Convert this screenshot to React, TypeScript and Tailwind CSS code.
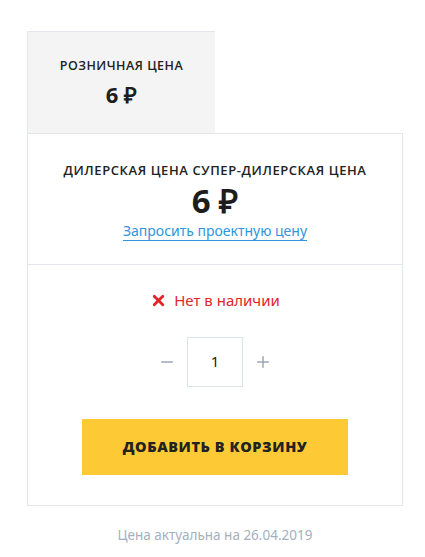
import { X, Minus, Plus } from "lucide-react";

export default function App() {
  return (
    <div className="min-h-[557px] bg-white pl-[27px] pt-[31px] font-['Noto_Sans',sans-serif]">
      <div className="w-[376px]">
        <div className="flex h-[102px] w-[188px] flex-col items-center justify-center border-l border-t border-[#e3e6ec] bg-[#f4f4f4]">
          <p className="font-['Open_Sans',sans-serif] text-[12.5px] font-semibold uppercase leading-none tracking-[0.04em] text-[#222]">
            Розничная цена
          </p>
          <p className="mt-[10px] font-['Open_Sans',sans-serif] text-[22px] font-bold leading-none text-[#1d1d1d]">
            6 ₽
          </p>
        </div>
        <div className="border border-[#e3e6ec]">
          <div className="flex h-[131px] flex-col items-center border-b border-[#e3e6ec] pt-[30px]">
            <p className="font-['Open_Sans',sans-serif] text-[13px] font-semibold uppercase leading-none tracking-[0.045em] text-[#222]">
              Дилерская цена Супер-дилерская цена
            </p>
            <p className="mt-[7px] font-['Open_Sans',sans-serif] text-[33px] font-bold leading-none text-[#1d1d1d]">
              6 ₽
            </p>
            <a
              href="#"
              className="mt-[5px] border-b border-[#2f96dc] text-[14px] leading-[18px] text-[#2f96dc]"
            >
              Запросить проектную цену
            </a>
          </div>
          <div className="flex h-[240px] flex-col items-center pt-[24px]">
            <div className="flex items-center gap-[7px] text-[15px] text-[#e0262a]">
              <X className="h-[17px] w-[17px]" strokeWidth={4} />
              <span>Нет в наличии</span>
            </div>
            <div className="mt-[25px] flex items-center">
              <button className="flex w-[40px] justify-center text-[#9aa6b6]">
                <Minus className="h-[18px] w-[18px]" strokeWidth={2} />
              </button>
              <div className="flex h-[50px] w-[56px] items-center justify-center border border-[#dde2ea] text-[15px] text-[#222]">
                1
              </div>
              <button className="flex w-[40px] justify-center text-[#9aa6b6]">
                <Plus className="h-[18px] w-[18px]" strokeWidth={2} />
              </button>
            </div>
            <button className="mt-[32px] flex h-[56px] w-[266px] items-center justify-center bg-[#fdca35] font-['Open_Sans',sans-serif] text-[14.5px] font-extrabold uppercase tracking-[0.04em] text-[#222]">
              Добавить в корзину
            </button>
          </div>
        </div>
        <p className="mt-[19px] text-center text-[13.5px] text-[#a5b0bf]">
          Цена актуальна на 26.04.2019
        </p>
      </div>
    </div>
  );
}
